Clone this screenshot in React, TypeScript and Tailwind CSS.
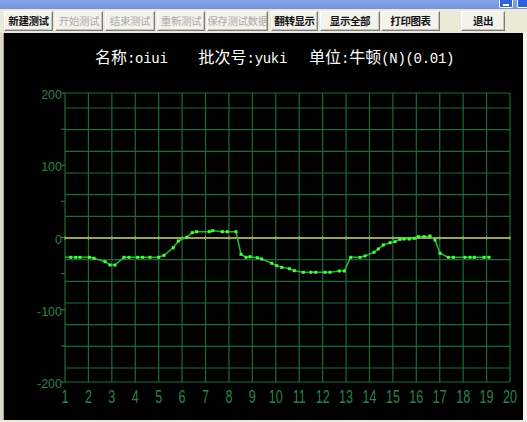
import React from "react";

const X0 = 65;
const X1 = 510;
const Y0 = 93;
const Y1 = 382;
const DX = (X1 - X0) / 19;
const ZERO = 238;

// measured trace, page pixels
const pts: [number, number][] = [
  [70.7, 257.3], [75.7, 257.3], [80, 257.3], [89.3, 257.3], [94, 258.3],
  [105, 261.7], [110, 265], [115, 265], [124, 257.3], [129, 257.3],
  [137.7, 257.3], [142.7, 257.3], [150, 257.3], [158.7, 257.3], [164, 255.3],
  [173.3, 247.7], [178.3, 241], [186.7, 237.3], [192.3, 232.7], [196.7, 231.7],
  [209.3, 231.7], [212.7, 230.7], [222.3, 231.7], [227.3, 231.7], [236, 231.7],
  [241, 254.3], [246, 257.3], [250, 256.7], [257.3, 257.7], [261.7, 259],
  [271.7, 263.3], [276.7, 265.7], [281.7, 267.3], [289.3, 268.7], [294.3, 270.7],
  [303.3, 272.3], [311, 272.3], [315.7, 272.3], [325, 272.3], [330, 272.3],
  [339.3, 271], [344.3, 271], [350.7, 257.3], [360, 257.3], [365, 256],
  [374, 252.3], [378.3, 249], [383.3, 245], [390, 242.7], [395, 241.7],
  [400, 239.3], [404, 239], [409.3, 239], [414.3, 238.3], [418.3, 236.7],
  [424, 236.7], [430, 236], [435, 240], [440, 253.3], [448.3, 257.3],
  [453.3, 257.3], [465, 257.3], [470, 257.3], [474.3, 257.3], [484, 257.3],
  [489, 257.3],
];

const buttons = [
  { label: "新建测试", w: 49, ml: 4, on: true },
  { label: "开始测试", w: 48, ml: 2, on: false },
  { label: "结束测试", w: 50, ml: 2, on: false },
  { label: "重新测试", w: 48, ml: 2, on: false },
  { label: "保存测试数据", w: 61, ml: 2, on: false },
  { label: "翻转显示", w: 47, ml: 3, on: true },
  { label: "显示全部", w: 60, ml: 2, on: true },
  { label: "打印图表", w: 59, ml: 1, on: true },
  { label: "退出", w: 44, ml: 21, on: true },
];

function Chart() {
  const hLines = [Y0, ...Array.from({ length: 13 }, (_, k) => 108 + k * 21.667), Y1];
  const vLines = Array.from({ length: 20 }, (_, i) => X0 + i * DX);
  const yLabels = [
    { v: "200", y: Y0 },
    { v: "100", y: 165.5 },
    { v: "0", y: ZERO },
    { v: "-100", y: 310 },
    { v: "-200", y: Y1 },
  ];
  const ticks = Array.from({ length: 9 }, (_, k) => Y0 + k * ((Y1 - Y0) / 8));
  const grid = "#1d6a3a";
  const label = "#2c8249";

  return (
    <svg width={519} height={340} className="block">
      <g transform="translate(-4,-80)">
        {hLines.map((y, i) => (
          <line key={"h" + i} x1={X0} x2={X1} y1={y} y2={y} stroke={grid} strokeWidth={1.2} />
        ))}
        {vLines.map((x, i) => (
          <line key={"v" + i} x1={x} x2={x} y1={Y0} y2={Y1} stroke={grid} strokeWidth={1.2} />
        ))}
        {ticks.map((y, i) => (
          <line key={"t" + i} x1={61} x2={X0} y1={y} y2={y} stroke={label} strokeWidth={1} />
        ))}
        {yLabels.map((l) => (
          <text
            key={l.v}
            x={62}
            y={l.y + 5.5}
            textAnchor="end"
            fill={label}
            fontSize={12.5}
            fontFamily="Liberation Sans, Arial, sans-serif"
          >
            {l.v}
          </text>
        ))}
        {vLines.map((x, i) => (
          <text
            key={"x" + i}
            transform={`translate(${x},${402.5}) scale(0.7,1)`}
            textAnchor="middle"
            fill={label}
            fontSize={18}
            fontFamily="Liberation Sans, Arial, sans-serif"
          >
            {i + 1}
          </text>
        ))}
        <line x1={X0} x2={X1} y1={ZERO} y2={ZERO} stroke="#c9c978" strokeWidth={1.3} />
        {vLines.map((x, i) => (
          <line key={"z" + i} x1={x} x2={x} y1={ZERO - 2} y2={ZERO + 2} stroke="#9c9c5c" strokeWidth={1} />
        ))}
        <polyline
          points={[[X0, 257.3], ...pts].map((p) => p.join(",")).join(" ")}
          fill="none"
          stroke="#2fae34"
          strokeWidth={1.6}
          strokeLinejoin="round"
        />
        {pts.map(([x, y], i) => (
          <rect key={"p" + i} x={x - 1.5} y={y - 1.5} width={3} height={3} fill="#47ff3c" />
        ))}
      </g>
    </svg>
  );
}

const mono = "font-['Liberation_Mono',monospace] text-[14px] tracking-[-0.3px]";

export default function App() {
  return (
    <div className="w-[527px] h-[422px] overflow-hidden bg-[#ece9d8] font-['Liberation_Sans','Noto_Sans_CJK_SC',sans-serif]">
      <div className="h-[9px] bg-gradient-to-b from-[#86a4ec] to-[#7292e0] flex justify-end items-start">
        <div className="w-[14px] h-[8px] mr-[4px] bg-[#2f62e0] border border-white rounded-b-[2px] border-t-0 flex items-end justify-center pb-[1px]">
          <div className="w-[6px] h-[2px] bg-white" />
        </div>
        <div className="w-[10px] h-[8px] bg-[#2f62e0] border border-white border-r-0 border-t-0 rounded-bl-[2px]" />
      </div>
      <div className="h-[24px] flex items-start pt-[2px]">
        {buttons.map((b) => (
          <div
            key={b.label}
            style={{ width: b.w, marginLeft: b.ml }}
            className={`h-[20px] shrink-0 whitespace-nowrap overflow-hidden flex items-center justify-center bg-[#f3f2ec] border-t border-l border-t-white border-l-white border-b border-r border-b-[#7a7a7a] border-r-[#7a7a7a] shadow-[inset_-1px_-1px_0_#c8c5b8] text-[10.5px] leading-none tracking-[-0.4px] ${
              b.on ? "text-[#111] font-bold" : "text-[#ababab]"
            }`}
          >
            {b.label}
          </div>
        ))}
      </div>
      <div className="flex">
        <div className="w-[4px] h-[387px] bg-[#dcd8cc] border-r border-r-[#a8a497]" />
        <div className="w-[519px] h-[387px] bg-black flex flex-col">
          <div className="h-[47px] pt-[16px] pl-[91px] leading-[18px] text-white text-[16px] whitespace-nowrap">
            <span>
              名称<span className={mono}>:oiui</span>
            </span>
            <span className="ml-[31px]">
              批次号<span className={mono}>:yuki</span>
            </span>
            <span className="ml-[22px]">
              单位<span className={mono}>:</span>牛顿<span className={mono}>(N)(0.01)</span>
            </span>
          </div>
          <Chart />
        </div>
        <div className="w-[4px] h-[387px] bg-[#f4f3ee]" />
      </div>
    </div>
  );
}
